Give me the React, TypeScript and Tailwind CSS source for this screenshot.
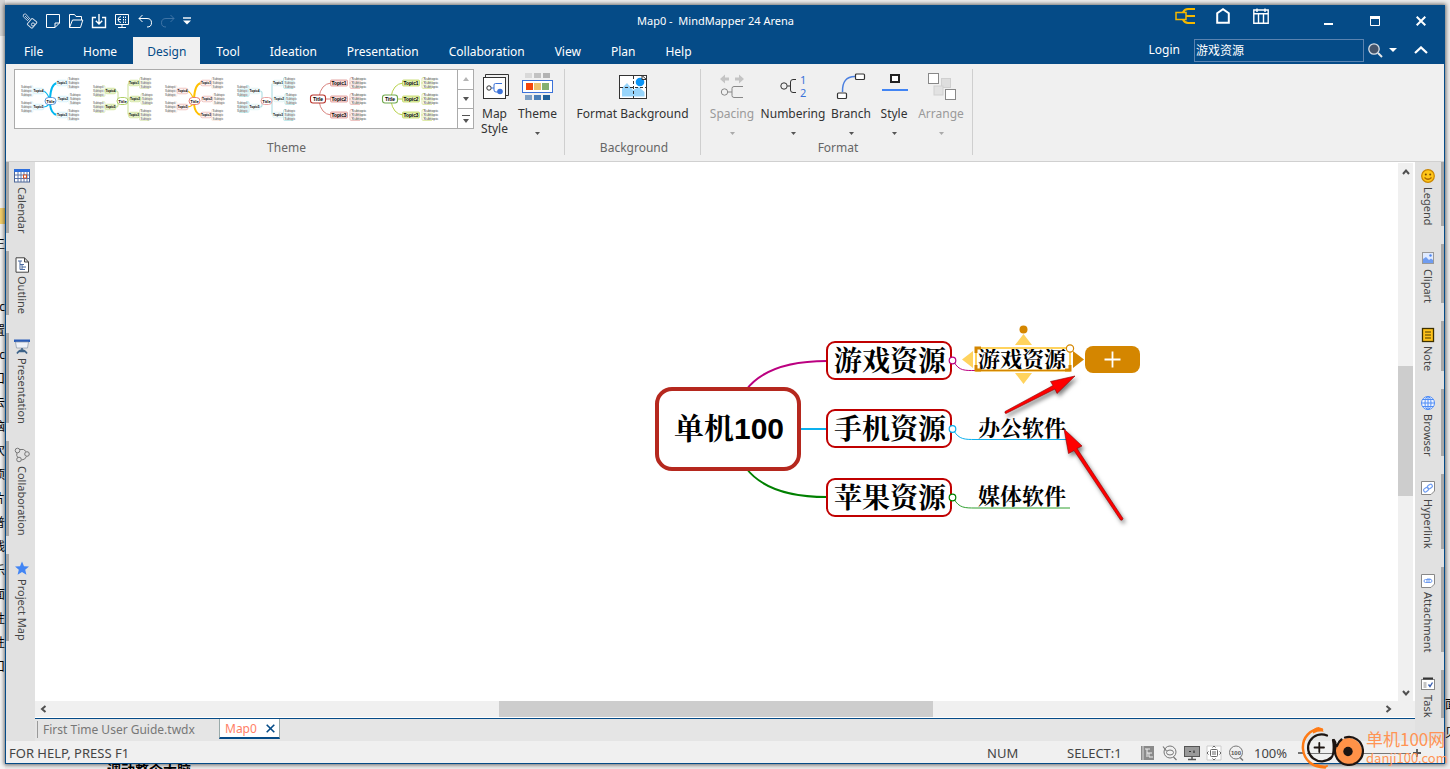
import React from "react";

const uiFont = "font-['Noto_Sans','Noto_Sans_CJK_SC',sans-serif]";

/* ---------- Theme thumbnails ---------- */

type Palette = { line: string; topic: string; fill: string; title: string; sub: string; curve: boolean };

function Label({ x, y, size, bold, children }: { x: number; y: number; size: number; bold?: boolean; children: string }) {
  return (
    <text x={x} y={y + size * 0.36} fontSize={size} textAnchor="middle" fontWeight={bold ? 700 : 400} fill={bold ? "#000" : "#444"} fontFamily="Liberation Sans, sans-serif">
      {children}
    </text>
  );
}

function Subs({ cx, y, side, color, size = 2.8 }: { cx: number; y: number; side: 1 | -1; color: string; size?: number }) {
  const half = size > 3 ? 8 : 5.5;
  const edge = cx - side * half;
  return (
    <g>
      <path
        d={`M${edge - side * 2} ${y} H${edge} M${edge + side * 2} ${y - 5.5} H${edge} q${-side} 0 ${-side} 1.5 V${y + 4} q0 1.5 ${side} 1.5 H${edge + side * 9} M${edge} ${y - 1.8} h${side * 10} M${edge} ${y + 2} h${side * 10}`}
        stroke={color}
        strokeWidth="0.6"
        fill="none"
        opacity="0.8"
      />
      {[-4, 0, 4].map((d) => (
        <Label key={d} x={cx} y={y + d} size={size}>
          Subtopic
        </Label>
      ))}
    </g>
  );
}

function RadialTheme({ p }: { p: Palette }) {
  const topics: [number, number, string][] = [
    [23.5, 21, "Topic4"],
    [23.5, 37, "Topic5"],
    [47, 13, "Topic1"],
    [48, 29, "Topic2"],
    [47, 45, "Topic3"],
  ];
  return (
    <svg viewBox="0 0 72 58" className="h-[58px] w-[72px]">
      {p.curve ? (
        <g fill="none" stroke={p.line}>
          <path d="M35 28 Q36 14 42 13 M35 34 Q36 44 42 45" strokeWidth="2" />
          <path d="M34 28 Q32 22 28 21 M34 34 Q32 37 28 37" strokeWidth="1.2" />
        </g>
      ) : (
        <path d="M29 21 q2 0 2 2 V35 q0 2 -2 2 M31 31 H40 M43 13 q-2 0 -2 2 V43 q0 2 2 2 M41 29 H44" fill="none" stroke={p.line} strokeWidth="1.2" />
      )}
      <Subs cx={11.5} y={21} side={-1} color={p.sub} />
      <Subs cx={11.5} y={37} side={-1} color={p.sub} />
      <Subs cx={59} y={13} side={1} color={p.sub} />
      <Subs cx={60.5} y={29} side={1} color={p.sub} />
      <Subs cx={59} y={45} side={1} color={p.sub} />
      {topics.map(([x, y, t]) => (
        <g key={t}>
          <rect x={x - 5.5} y={y - 2.8} width="11" height="5.6" rx="2" fill={p.fill} stroke={p.topic} strokeWidth="0.6" />
          <Label x={x} y={y} size={3.2} bold>
            {t}
          </Label>
        </g>
      ))}
      <rect x="30" y="27.5" width="11" height="7" rx="3.5" fill="#fff" stroke={p.title} strokeWidth="0.9" />
      <Label x={35.5} y={31} size={4.2} bold>
        Title
      </Label>
    </svg>
  );
}

function RightTheme({ line, title, fill }: { line: string; title: string; fill: string }) {
  return (
    <svg viewBox="0 0 72 58" className="h-[58px] w-[72px]">
      <path d="M16 27 Q18 14 28 13 M20 29 H28 M16 31 Q18 44 28 45" fill="none" stroke={line} strokeWidth="1" />
      {[13, 29, 45].map((y, i) => (
        <g key={y}>
          <Subs cx={56} y={y} side={1} color={line} size={3.8} />
          <rect x="27.5" y={y - 3} width="17" height="6" rx="1" fill={fill} stroke={line} strokeWidth="0.7" />
          <Label x={36} y={y} size={4.8} bold>
            {`Topic${i + 1}`}
          </Label>
        </g>
      ))}
      <rect x="7.5" y="25" width="15" height="8" rx="2.5" fill="#fff" stroke={title} strokeWidth="1.1" />
      <Label x={15} y={29} size={5} bold>
        Title
      </Label>
    </svg>
  );
}

function ThemeGallery() {
  return (
    <div className="flex h-[60px] w-[460px] shrink-0 border border-[#ababab] bg-white">
      <div className="flex flex-1 overflow-hidden">
        <button aria-label="Blue theme"><RadialTheme p={{ line: "#00b7f0", topic: "#c5ecf8", fill: "#f2fbfe", title: "#4a8fd8", sub: "#cfe8f0", curve: true }} /></button>
        <button aria-label="Green theme"><RadialTheme p={{ line: "#d3e4a4", topic: "#c9e08c", fill: "#e4f0c6", title: "#a7c957", sub: "#c3d98c", curve: false }} /></button>
        <button aria-label="Yellow theme"><RadialTheme p={{ line: "#ffc000", topic: "#e8a9a4", fill: "#fdf1f0", title: "#e57368", sub: "#f3d6c8", curve: true }} /></button>
        <button aria-label="Teal theme"><RadialTheme p={{ line: "#b5e0e4", topic: "#d8f0f0", fill: "#f4fcfc", title: "#e59a98", sub: "#7fcfd2", curve: false }} /></button>
        <button aria-label="Red theme"><RightTheme line="#d9837e" title="#b8332b" fill="#f9dddb" /></button>
        <button aria-label="Lime theme"><RightTheme line="#b9d24c" title="#6fa84c" fill="#e2efb0" /></button>
      </div>
      <div className="flex w-4 flex-col divide-y divide-[#ababab] border-l border-[#ababab]">
        <button aria-label="Scroll up" className="flex flex-1 items-center justify-center">
          <svg viewBox="0 0 6 4" className="h-1 w-[6px]"><path d="M0 4 L3 0 L6 4z" fill="#b5b5b5" /></svg>
        </button>
        <button aria-label="Scroll down" className="flex flex-1 items-center justify-center">
          <svg viewBox="0 0 6 4" className="h-1 w-[6px]"><path d="M0 0 L3 4 L6 0z" fill="#555" /></svg>
        </button>
        <button aria-label="More themes" className="flex flex-1 items-center justify-center">
          <svg viewBox="0 0 8 8" className="h-2 w-2"><path d="M0 .5H8" stroke="#555" /><path d="M1 4 L4 8 L7 4z" fill="#555" /></svg>
        </button>
      </div>
    </div>
  );
}

/* ---------- Title bar ---------- */

const quickIcons: { name: string; art: React.ReactNode }[] = [
  {
    name: "Customize",
    art: (
      <g>
        <path d="M1.5 1.5 L3.5 .8 L8 6 M1.5 1.5 L1.2 3.6 L6 8 M3 3 L7 7" stroke="#b9c9dc" />
        <rect x="7" y="6.2" width="6.5" height="8" rx="1" transform="rotate(40 10 10)" stroke="#d5deea" />
        <circle cx="11" cy="11.5" r="1.6" stroke="#d5deea" />
      </g>
    ),
  },
  { name: "New", art: <path d="M1.5 1.5 H14.5 V10 L10 14.5 H1.5z M10 14.5 V10 H14.5" stroke="#fff" /> },
  { name: "Open", art: <path d="M1.5 14.5 V1.5 H6.5 L8 3.5 H13.5 V7 M1.5 14.5 L4.5 7 H14.8 L12.5 14.5z" stroke="#fff" /> },
  { name: "Save", art: <path d="M5 4.5 H1.5 V14.5 H14.5 V4.5 H11 M8 1 V11 M4.8 7.8 L8 11 L11.2 7.8" stroke="#fff" strokeWidth="1.4" /> },
  { name: "Present", art: <path d="M1.5 1.5 H14.5 V11.5 H1.5z M8 11.5 V14.5 M4 14.5 H12 M7 3.5 Q4 4 4 6.500 T7 9.500 M4 6.500 H7 M9.500 3.500V5M9.500 6V7.500M9.500 8.500V10M11.500 3.500V5M11.500 6V7.500M11.500 8.500V10" stroke="#fff" /> },
  { name: "Undo", art: <path d="M5.5 2 L2 5.5 L5.5 9 M2 5.5 H10 Q14.5 5.5 14.5 9.8 T10 14" stroke="#fff" /> },
  { name: "Redo", art: <path d="M10.5 2 L14 5.5 L10.5 9 M14 5.5 H6 Q1.5 5.5 1.5 9.8 T6 14" stroke="#3f74a6" /> },
];

function TitleBar() {
  return (
    <div className="flex h-[30px] items-center text-white">
      <div className="flex w-[259px] items-center gap-[7px] pl-4">
        {quickIcons.map((q) => (
          <button key={q.name} aria-label={q.name} className="size-4">
            <svg viewBox="0 0 16 16" className="size-4" fill="none">{q.art}</svg>
          </button>
        ))}
        <button aria-label="Customize quick access">
          <svg viewBox="0 0 8 8" className="h-2 w-2"><path d="M0 1H8" stroke="#fff" strokeWidth="1.4" /><path d="M0 3.4H8L4 7.6z" fill="#fff" /></svg>
        </button>
      </div>
      <h1 className="flex-1 whitespace-pre text-center text-[11px]">Map0 -  MindMapper 24 Arena</h1>
      <div className="flex h-full w-[278px]">
        <div className="flex h-[18px] w-[114px]">
          <button aria-label="Map view" className="flex w-[38px] items-end justify-center">
            <svg viewBox="0 0 20 16" className="h-4 w-5" fill="none" stroke="#f5b800" strokeWidth="2"><rect x="1" y="4.5" width="10" height="7" strokeWidth="1.500" /><path d="M8 4.500 Q9.500 1 13 1 H20 M11 8 H20 M8 11.500 Q9.500 15 13 15 H20" /></svg>
          </button>
          <button aria-label="Home view" className="flex w-[38px] items-end justify-center">
            <svg viewBox="0 0 14 16" className="h-4 w-[14px]" fill="none" stroke="#fff" strokeWidth="2"><path d="M1.2 14.8 V5.2 L7 1.2 L12.8 5.2 V14.8z" /></svg>
          </button>
          <button aria-label="Planner view" className="flex w-[38px] items-end justify-center">
            <svg viewBox="0 0 16 16" className="size-4" fill="none" stroke="#fff" strokeWidth="1.4"><path d="M.8 2 H15.2 V15.2 H.8z M.8 5.8 H15.2 M5.5 6V15 M10.5 6V15 M4 .5V4 M12 .5V4" /></svg>
          </button>
        </div>
        <div className="ml-auto flex">
          <button aria-label="Minimize" className="flex w-[46px] items-center justify-center">
            <svg viewBox="0 0 10 10" className="h-[10px] w-[10px]"><path d="M0 8H9" stroke="#fff" strokeWidth="2" /></svg>
          </button>
          <button aria-label="Maximize" className="flex w-[46px] items-center justify-center">
            <svg viewBox="0 0 10 10" className="h-[10px] w-[10px]"><path d="M.5 .5H9.5V9.5H.5z" stroke="#fff" fill="none" /><path d="M0 1.5H10" stroke="#fff" strokeWidth="3" /></svg>
          </button>
          <button aria-label="Close" className="flex w-[46px] items-center justify-center">
            <svg viewBox="0 0 10 10" className="h-[10px] w-[10px]"><path d="M.7 .7L9.3 9.3M9.3 .7L.7 9.3" stroke="#fff" strokeWidth="2" /></svg>
          </button>
        </div>
      </div>
    </div>
  );
}

function MenuRow() {
  const tabs = ["Home", "Design", "Tool", "Ideation", "Presentation", "Collaboration", "View", "Plan", "Help"];
  return (
    <div className="flex h-7 items-end text-[12px] text-white">
      <nav className="flex gap-[2px]">
        <button className="h-[27px] w-[61px] pl-[18px] pt-[2px] text-left">File</button>
        {tabs.map((t) => (
          <button key={t} className={t === "Design" ? "h-[27px] bg-[#f0f0f0] px-[14px] pt-[2px] text-[#054b87]" : "h-[27px] px-[14px] pt-[2px]"}>
            {t}
          </button>
        ))}
      </nav>
      <div className="ml-auto flex h-full items-center">
        <a href="#login" className="mr-[14px]">Login</a>
        <input aria-label="Search" defaultValue="游戏资源" className="h-[23px] w-[170px] border border-[#5a83b0] bg-transparent px-px text-[12px] text-white outline-none" />
        <button aria-label="Find" className="ml-1">
          <svg viewBox="0 0 15 15" className="h-[15px] w-[15px]"><circle cx="6" cy="6" r="5.2" fill="#46556b" stroke="#d9dfe6" strokeWidth="1.3" /><path d="M10 10L14 14" stroke="#e8e8e8" strokeWidth="2" /></svg>
        </button>
        <button aria-label="Find options" className="ml-[6px]">
          <svg viewBox="0 0 8 4" className="h-1 w-2"><path d="M0 0H8L4 4z" fill="#fff" /></svg>
        </button>
        <button aria-label="Collapse ribbon" className="ml-[17px] mr-4">
          <svg viewBox="0 0 14 8" className="h-2 w-[14px]"><path d="M1 7L7 1.4L13 7" stroke="#fff" strokeWidth="2.2" fill="none" /></svg>
        </button>
      </div>
    </div>
  );
}

/* ---------- Ribbon ---------- */

function RibbonButton({ label, width, icon, drop, disabled }: { label: string; width: string; icon: React.ReactNode; drop?: boolean; disabled?: boolean }) {
  return (
    <button disabled={disabled} className={`${width} flex h-[70px] shrink-0 flex-col items-center ${disabled ? "text-[#9a9a9a]" : "text-[#333]"}`}>
      <span className="flex h-[37px] items-start pt-1">
        <svg viewBox="0 0 32 28" className="h-7 w-8" fill="none">{icon}</svg>
      </span>
      <span className="text-center text-[12px] leading-[15px]">{label}</span>
      {drop && (
        <svg viewBox="0 0 5 3" className="mt-[11px] h-[3px] w-[5px]"><path d="M0 0H5L2.5 3z" fill={disabled ? "#aaa" : "#555"} /></svg>
      )}
    </button>
  );
}

function Group({ title, width, children }: { title: string; width: string; children: React.ReactNode }) {
  return (
    <section className={`${width} flex h-full shrink-0 pb-[6px] pt-[5px]`}>
      <div className="flex flex-1 flex-col border-r border-[#cfcfcf]">
        <div className="flex flex-1">{children}</div>
        <h2 className="h-[15px] pl-[3px] text-center text-[12px] leading-[15px] text-[#666]">{title}</h2>
      </div>
    </section>
  );
}

function Ribbon() {
  const ink = "#333";
  return (
    <div className="flex h-[98px] shrink-0 border-b border-[#d0d0d0] bg-[#f0f0f0]">
      <Group title="Theme" width="w-[559px]">
        <div className="flex pl-2">
          <ThemeGallery />
          <RibbonButton
            label="Map Style"
            width="w-[41px]"
            icon={<g stroke={ink}><path d="M6.5 4.5V1.5H29.5V22.5H27" /><rect x="4.5" y="4.5" width="22" height="21" fill="#fff" /><circle cx="10" cy="15" r="2.2" /><path d="M12.2 15H15 M23 10.5H16.5Q15 10.5 15 12V17Q15 19 17 19H19" stroke="#3b72d9" /><circle cx="21" cy="18.5" r="2.8" fill="#3b72d9" stroke="none" /></g>}
          />
          <RibbonButton
            label="Theme"
            width="w-[45px]"
            drop
            icon={
              <g>
                {["#d9d9d9", "#c2c2c2", "#b3b3b3"].map((c, i) => <rect key={c} x={3 + i * 9} y="0" width="7" height="5" fill={c} />)}
                <rect x=".5" y="7.5" width="30" height="12" stroke="#3b72d9" fill="#fff" />
                {["#f5450a", "#ecc36e", "#84b070"].map((c, i) => <rect key={c} x={4 + i * 8} y="10" width="7" height="7" fill={c} />)}
                {["#7fa0c4", "#4a7fb8", "#1f6099"].map((c, i) => <rect key={c} x={3 + i * 9} y="22" width="7" height="5" fill={c} />)}
              </g>
            }
          />
        </div>
      </Group>
      <Group title="Background" width="w-[136px]">
        <RibbonButton
          label="Format Background"
          width="w-full"
          icon={
            <g>
              <rect x="2.5" y="2.5" width="27" height="23" fill="#fff" stroke={ink} />
              <path d="M5 23.5V15L10 10L16 17L22 14L27.5 19V23.5z" fill="#98d5fb" />
              <circle cx="23" cy="9" r="4.3" fill="#0a93f5" />
              <path d="M16.5 3V25M3 14.5H29" stroke={ink} strokeDasharray="3 2" />
              <path d="M25 2.5V6.5H29.5z" fill="#fff" stroke={ink} />
            </g>
          }
        />
      </Group>
      <Group title="Format" width="w-[272px]">
        <div className="flex pl-1">
          <RibbonButton label="Spacing" width="w-[54px]" drop disabled icon={<g><path d="M4 6L9 1.500V4.500H13V7.500H9V10.500z M28 6L23 1.500V4.500H19V7.500H23V10.500z" fill="#c4c4c4" /><circle cx="8.500" cy="19" r="3.200" stroke="#888" /><path d="M12 19H16 M27 13.500H18Q16 13.500 16 15.500V22.500Q16 24.500 18 24.500H27" stroke="#888" /></g>} />
          <RibbonButton label="Numbering" width="w-[68px]" drop icon={<g><circle cx="7" cy="13" r="3.200" stroke={ink} /><path d="M10.500 13H13.500 M19 6.500H16Q13.500 6.500 13.500 9V17Q13.500 19.500 16 19.500H19" stroke={ink} /><text x="23" y="11" fontSize="11" fill="#3b72d9" fontFamily="Noto Sans">1</text><text x="23" y="24" fontSize="11" fill="#3b72d9" fontFamily="Noto Sans">2</text></g>} />
          <RibbonButton label="Branch" width="w-[48px]" drop icon={<g><path d="M7.500 19Q7 3.500 20 3.500" stroke="#4a7fe0" strokeWidth="1.500" /><rect x="20.500" y="1" width="9" height="5.500" rx="1" fill="#fff" stroke={ink} strokeWidth="1.200" /><rect x="2.500" y="20" width="9" height="5.500" rx="1" fill="#fff" stroke={ink} strokeWidth="1.200" /></g>} />
          <RibbonButton label="Style" width="w-[38px]" drop icon={<g><rect x="13" y="2" width="8" height="7" fill="#fff" stroke="#222" strokeWidth="2" /><path d="M4 17H30" stroke="#4285f4" strokeWidth="2" /></g>} />
          <RibbonButton label="Arrange" width="w-[56px]" drop disabled icon={<g stroke="#888"><rect x="16.500" y="5.500" width="9" height="9" fill="#dedede" stroke="#d0d0d0" /><rect x="9" y="13" width="9" height="9" fill="#e2e2e2" stroke="#d0d0d0" /><rect x="3.500" y=".5" width="10" height="10" fill="#fff" /><rect x="20.500" y="16.500" width="10" height="10" fill="#fff" /></g>} />
        </div>
      </Group>
    </div>
  );
}

/* ---------- Side panels ---------- */

type SideItem = { label: string; art: React.ReactNode };

const leftItems: SideItem[] = [
  { label: "Calendar", art: <g><rect x=".5" y="2" width="15" height="12" fill="#fff" stroke="#4a6496" /><path d="M0 1H16V4H0z" fill="#2f6fdc" /><path d="M1 7H15M1 10.500H15M4 4V14M7 4V14M10 4V14M13 4V14" stroke="#5a74a8" /><rect x="9.500" y="7" width="3" height="3" fill="#fff" stroke="#d9501e" /></g> },
  { label: "Outline", art: <g><path d="M2 .8H10.500L14.500 5V15.200H2z M10.500 .8V5H14.500" fill="#fff" stroke="#444" /><path d="M4 4H8M6 4V12.500M6 7.500H10M8 7.500V12M8 10H12M6 12.500H11" stroke="#4a6aa0" fill="none" /></g> },
  { label: "Presentation", art: <g><path d="M0 .5H16V3H0z" fill="#2a5db8" /><path d="M1.500 3H14.500L13.500 9H2.500z" fill="#eef2f8" stroke="#8a96a8" strokeWidth=".7" /><path d="M8 9V13M3 14.500Q5 11 8 11T13 14.500M5 12.500H11" stroke="#3c6288" strokeWidth="1.600" fill="none" /></g> },
  { label: "Collaboration", art: <g fill="none" stroke="#777"><circle cx="3.500" cy="3.500" r="2.300" /><circle cx="13" cy="7" r="2.300" /><circle cx="5" cy="12.500" r="2.300" /><path d="M6 2.500Q10 1.500 12 4.500M12.500 9.500Q11 13 7.500 13M3 6Q2 8.500 3.800 10.500" /></g> },
  { label: "Project Map", art: <path d="M8 1.500L10 6.200L15 6.500L11.200 9.800L12.400 14.700L8 12L3.600 14.700L4.800 9.800L1 6.500L6 6.200z" fill="#4285f4" /> },
];

const rightItems: SideItem[] = [
  { label: "Legend", art: <g><circle cx="8" cy="8" r="6.300" fill="#ffc61a" stroke="#c98500" strokeWidth="1.200" /><circle cx="5.800" cy="6.500" r="1" fill="#7a4a00" /><circle cx="10.200" cy="6.500" r="1" fill="#7a4a00" /><path d="M4.500 9.500Q8 13 11.500 9.500" stroke="#a86400" fill="none" strokeWidth="1.200" /></g> },
  { label: "Clipart", art: <g><rect x="2.500" y="2.500" width="11" height="11" fill="#dfeaff" stroke="#999" /><path d="M3 13V9L6 7L9 10L11 8.500L13 10V13z" fill="#6f9cf0" /><circle cx="10.500" cy="5.500" r="1.200" fill="#4f86ee" /></g> },
  { label: "Note", art: <g><rect x="2.500" y="1.500" width="11" height="13" fill="#ffc21a" stroke="#3d3000" strokeWidth="1.300" /><path d="M5 5H11M5 8H11M5 11H11" stroke="#4a3a00" /></g> },
  { label: "Browser", art: <g fill="#eef4ff" stroke="#4f8cf5"><circle cx="8" cy="8" r="6.500" /><ellipse cx="8" cy="8" rx="3" ry="6.500" fill="none" /><path d="M1.500 8H14.500M2.500 4.500H13.500M2.500 11.500H13.500M8 1.500V14.500" /></g> },
  { label: "Hyperlink", art: <g fill="none"><path d="M1.500 1.500H14.500V11L11 14.500H1.500z" fill="#fff" stroke="#888" /><rect x="3.500" y="8" width="5" height="3.500" rx="1.500" transform="rotate(-35 6 9.700)" stroke="#6f9cf0" strokeWidth="1.200" /><rect x="7.500" y="4.700" width="5" height="3.500" rx="1.500" transform="rotate(-35 10 6.500)" stroke="#6f9cf0" strokeWidth="1.200" /></g> },
  { label: "Attachment", art: <g fill="none"><path d="M1.500 1.500H14.500V11L11 14.500H1.500z" fill="#fff" stroke="#888" /><path d="M11 6.500H5.500Q4 6.500 4 8T5.500 9.500H10Q12 9.500 12 8T10 6H7M6 8H10" stroke="#6f9cf0" /></g> },
  { label: "Task", art: <g><rect x="1.500" y="3.500" width="13" height="10" fill="#fff" stroke="#888" /><path d="M3 2.500H13" stroke="#333" strokeWidth="2" /><path d="M3.500 7H6.500M3.500 9H6.500M3.500 11H6.500" stroke="#888" /><path d="M8.500 8.500L10 10.500L12.500 6.500" stroke="#3b5fb0" strokeWidth="1.400" fill="none" /></g> },
];

function SidePanel({ items, side }: { items: SideItem[]; side: "left" | "right" }) {
  return (
    <aside className="flex w-[29px] shrink-0 flex-col gap-[18px] overflow-hidden bg-[#e1e1e1]">
      {items.map((it) => (
        <button
          key={it.label}
          className={
            side === "left"
              ? "flex w-full shrink-0 flex-col items-center gap-[3px] border-l-[3px] border-[#a8a8a8] pt-[6px]"
              : "flex w-full shrink-0 flex-col items-center gap-[3px] border-r-[3px] border-[#a8a8a8] pt-[6px]"
          }
        >
          <svg viewBox="0 0 16 16" className="size-4 shrink-0">{it.art}</svg>
          <span className="text-[11px] leading-4 text-[#444] [writing-mode:vertical-rl]">{it.label}</span>
        </button>
      ))}
    </aside>
  );
}

/* ---------- Mind map ---------- */

function MindMap() {
  const topic = "absolute flex h-[39px] w-[126px] items-center justify-center rounded-[9px] border-2 border-[#c00000] bg-white pl-[2px] pt-[2px] text-[28px] leading-none font-bold";
  const sub = "absolute w-[92px] text-center text-[22px] leading-[24px] font-bold";
  return (
    <div className="absolute left-[620px] top-[163px] h-[200px] w-[490px] whitespace-nowrap text-black font-['Liberation_Serif','Noto_Serif_CJK_SC','Noto_Sans_CJK_SC',serif]">
      <svg viewBox="655 325 490 200" className="absolute inset-0 h-[200px] w-[490px]" fill="none">
        <path d="M746 390Q768 361 827 361" stroke="#bb0080" strokeWidth="2" />
        <path d="M800 429H827" stroke="#0cb0ee" strokeWidth="2" />
        <path d="M746 468Q768 497 827 497" stroke="#008000" strokeWidth="2" />
        <path d="M954 362C959 371 965 370.500 975 370.500H1071" stroke="#bb0080" />
        <path d="M954 431C959 439.500 965 439.500 975 439.500H1070" stroke="#0cb0ee" />
        <path d="M954 499C959 508 965 508 975 508H1070" stroke="#30a030" />
      </svg>
      <div className="absolute left-0 top-[62px] flex h-[84px] w-[146px] items-center justify-center rounded-[17px] border-4 border-[#b5281e] bg-white pl-[2px] text-[30px] leading-none font-bold font-['Liberation_Sans','Noto_Serif_CJK_SC','Noto_Sans_CJK_SC',sans-serif]">单机100</div>
      <div className={`${topic} left-[171px] top-[16px]`}>游戏资源</div>
      <div className={`${topic} left-[171px] top-[84px]`}>手机资源</div>
      <div className={`${topic} left-[171px] top-[153px]`}>苹果资源</div>
      <div className={`${sub} left-[321px] top-[23px]`}>游戏资源</div>
      <div className={`${sub} left-[321px] top-[92px]`}>办公软件</div>
      <div className={`${sub} left-[321px] top-[160px]`}>媒体软件</div>
      <button aria-label="Add topic" className="absolute left-[430px] top-[21px] flex h-[27px] w-[55px] items-center justify-center rounded-[8px] bg-[#d48600]">
        <svg viewBox="0 0 17 17" className="h-[17px] w-[17px]"><path d="M8.500 .5V16.500M.5 8.500H16.500" stroke="#fff" strokeWidth="1.800" /></svg>
      </button>
      <svg viewBox="655 325 490 200" className="pointer-events-none absolute inset-0 h-[200px] w-[490px] overflow-visible" fill="none">
        <g fill="#fff" strokeWidth="1.200">
          <circle cx="952.500" cy="360.500" r="3.300" stroke="#bb0080" />
          <circle cx="952.500" cy="429" r="3.300" stroke="#0cb0ee" />
          <circle cx="952.500" cy="497.500" r="3.300" stroke="#008000" />
        </g>
        <rect x="976" y="348" width="94" height="22.500" stroke="#ffd35e" strokeWidth="2" />
        <path d="M981 348H976V353M976 365V370H981M1070 365V370H1065" stroke="#d48600" strokeWidth="3" />
        <path d="M976 370.500H1070" stroke="#d48600" strokeWidth="1.500" />
        <circle cx="1070" cy="348.500" r="3.600" fill="#fff" stroke="#d48600" strokeWidth="1.200" />
        <circle cx="1023.500" cy="329.500" r="4" fill="#d48600" />
        <path d="M1015 345L1023.500 334L1032 345zM1015 373H1032L1023.500 384zM973 351V368L962 359.500z" fill="#ffd35e" />
        <path d="M1073 351V368L1084 359.500z" fill="#d48600" />
        <g fill="#fe0000" stroke="#8a0000" strokeWidth=".6" className="drop-shadow-[2px_3px_2px_rgba(0,0,0,0.5)]">
          <path d="M1005 411.500L1053 385.500L1050.500 381.500L1075 376L1057 393.500L1055 389L1006 413.500Q1004.500 413.500 1005 411.500z" />
          <path d="M1064 429L1082 446L1077 448.500L1123 518.500Q1122.500 521 1120.500 520L1074 450.500L1068.500 453.500z" />
        </g>
      </svg>
    </div>
  );
}

function Chevron({ d }: { d: string }) {
  return (
    <svg viewBox="0 0 8 8" className="size-2"><path d={d} stroke="#505050" strokeWidth="2" fill="none" /></svg>
  );
}

function Workspace() {
  return (
    <main className="flex min-w-0 flex-1 flex-col bg-white">
      <div className="flex min-h-0 flex-1">
        <div className="relative min-w-0 flex-1 overflow-hidden bg-white">
          <MindMap />
        </div>
        <div className="mr-[2px] mt-px flex w-[15px] shrink-0 flex-col items-center bg-[#f0f0f0]">
          <button aria-label="Scroll up" className="flex h-[17px] items-center"><Chevron d="M1 6L4 2.500L7 6" /></button>
          <div className="flex w-full flex-1 flex-col">
            <div className="flex-[186]" />
            <div className="w-full flex-[130] bg-[#cdcdcd]" />
            <div className="flex-[188]" />
          </div>
          <button aria-label="Scroll down" className="flex h-[17px] items-center"><Chevron d="M1 2L4 5.500L7 2" /></button>
        </div>
      </div>
      <div className="mb-px flex h-4 shrink-0 items-center bg-[#f0f0f0] pr-[18px]">
        <button aria-label="Scroll left" className="flex h-full w-[18px] items-center justify-center"><Chevron d="M5.500 1L2 4L5.500 7" /></button>
        <div className="flex h-full flex-1">
          <div className="flex-[446]" />
          <div className="flex-[434] bg-[#cdcdcd]" />
          <div className="flex-[446]" />
        </div>
        <button aria-label="Scroll right" className="flex h-full w-[18px] items-center justify-center"><Chevron d="M2.500 1L6 4L2.500 7" /></button>
      </div>
      <div className="flex h-[23px] shrink-0 items-start border-t border-[#054b87] bg-[#e5e5e5] text-[12px] leading-[19px]">
        <button className="ml-[2px] mt-[2px] w-[182px] border-l border-[#999] pl-[5px] text-left leading-[17px] text-[#777]">First Time User Guide.twdx</button>
        <div className="flex h-[20px] w-[61px] items-center justify-between border border-b-2 border-t-0 border-[#9aa] border-b-[#054b87] bg-white pl-[5px] pr-1 text-[#ff7f66]">
          <button>Map0</button>
          <button aria-label="Close Map0">
            <svg viewBox="0 0 9 9" className="h-[9px] w-[9px]"><path d="M.7 .7L8.300 8.300M8.300 .7L.7 8.300" stroke="#054b87" strokeWidth="1.600" /></svg>
          </button>
        </div>
      </div>
    </main>
  );
}

/* ---------- Status bar ---------- */

function StatusBar() {
  return (
    <footer className="flex h-[22px] shrink-0 items-center bg-[#f0f0f0] pl-[3px] pt-[2px] text-[13px] leading-5 text-[#444]">
      <span>FOR HELP, PRESS F1</span>
      <span className="ml-auto w-[80px]">NUM</span>
      <span className="w-[73px]">SELECT:1</span>
      <div className="flex gap-[6px]">
        <button aria-label="Outline view"><svg viewBox="0 0 16 16" className="size-4"><rect x="1" y="1" width="13" height="14" fill="#8a8a8a" /><path d="M3 1V15" stroke="#ddd" /><path d="M5 4H10M7 4V12M7 8H12M9 8V12H13" stroke="#eee" fill="none" /></svg></button>
        <button aria-label="Focus"><svg viewBox="0 0 16 16" className="size-4" fill="none" stroke="#777"><circle cx="8" cy="7" r="6" /><ellipse cx="8" cy="7.500" rx="3.500" ry="2.500" /><path d="M1 1.500L4.500 6M11.500 12L14.500 15" strokeWidth="1.200" /></svg></button>
        <button aria-label="Full screen"><svg viewBox="0 0 16 16" className="size-4"><rect x=".5" y="1.500" width="15" height="10" fill="#999" stroke="#555" /><path d="M8 12V14.500M4 14.500H12" stroke="#555" strokeWidth="1.500" /><path d="M5 6.500H7M10 5.500V8" stroke="#333" strokeWidth="1.200" /></svg></button>
        <button aria-label="Fit map"><svg viewBox="0 0 16 16" className="size-4" fill="none" stroke="#666"><path d="M1 1H15V15H1z" fill="#fff" stroke="#ccc" /><rect x="4.500" y="4.500" width="7" height="7" rx="1" /><path d="M6 7H10M6 9H10M6.500 2.500L8 1L9.500 2.500M6.500 13.500L8 15L9.500 13.500M2.500 6.500L1 8L2.500 9.500M13.500 6.500L15 8L13.500 9.500" /></svg></button>
        <button aria-label="Actual size"><svg viewBox="0 0 16 16" className="size-4" fill="none" stroke="#777"><circle cx="8" cy="7.500" r="6.500" /><path d="M12 12.500L15 15.500" strokeWidth="1.400" /><text x="8" y="9.800" fontSize="6" fontWeight="700" textAnchor="middle" fill="#555" stroke="none" fontFamily="Liberation Sans">100</text></svg></button>
      </div>
      <span className="ml-[10px] w-[43px]">100%</span>
      <button aria-label="Zoom out" className="flex w-[10px] items-center"><svg viewBox="0 0 8 8" className="size-2"><path d="M1 4H7" stroke="#555" strokeWidth="1.600" /></svg></button>
      <input type="range" aria-label="Zoom" min={0} max={100} defaultValue={35} className="h-px w-[104px] appearance-none bg-[#777] [&::-webkit-slider-thumb]:h-3 [&::-webkit-slider-thumb]:w-[6px] [&::-webkit-slider-thumb]:appearance-none [&::-webkit-slider-thumb]:bg-[#777]" />
      <button aria-label="Zoom in" className="ml-[2px] mr-[23px]"><svg viewBox="0 0 8 8" className="size-2"><path d="M0 4H8M4 0V8" stroke="#555" strokeWidth="1.800" /></svg></button>
    </footer>
  );
}

function SiteBadge() {
  return (
    <div className="pointer-events-none absolute bottom-0 right-[4px] flex h-[43px] items-start">
      <svg viewBox="1300 726 66 43" className="h-[43px] w-[66px]" fill="none" strokeLinecap="round">
        <path d="M1322 729.500C1310 728 1302 738 1303 749C1304 760 1312 767 1325 767.500" stroke="#ff7a14" strokeWidth="2.500" />
        <path d="M1314 730Q1320 726 1322 730.500Q1318 730 1314 732zM1317 765Q1324 768 1327 766" fill="#ff7a14" stroke="#ff7a14" strokeWidth="2" />
        <circle cx="1348.500" cy="751.500" r="13.500" fill="#ff9248" />
        <path d="M1327 735.500A13.500 13.500 0 1 0 1331 757.500" stroke="#1d1512" strokeWidth="2.200" />
        <path d="M1333 740Q1334 745 1333.500 751Q1333 758 1329 759.500M1337 746Q1338.500 741.500 1341.500 739.500M1345 737.500A14 14 0 1 1 1335.500 747Q1336 742 1334 740" stroke="#1d1512" strokeWidth="2.200" />
        <path d="M1314.500 747.500H1324M1319.300 743V752" stroke="#1d1512" strokeWidth="1.800" />
        <circle cx="1348" cy="751.500" r="4.700" fill="#1d1512" />
      </svg>
      <div className="w-20 whitespace-nowrap text-[#ff9455] font-['Noto_Sans_CJK_SC',sans-serif]">
        <p className="mt-[3px] text-[17px] leading-[20px]">单机100网</p>
        <p className="text-[13px] leading-[17px]">danji100.com</p>
      </div>
    </div>
  );
}

function Backdrop() {
  const fragments = ["c", "置", "c", "口", "去", "脑", "次", "项", "片", "普", "线", "乐", "面", "性", "性", "口"];
  return (
    <div aria-hidden="true" className="absolute inset-0 flex justify-between overflow-hidden bg-[#ececec] text-[12px] leading-6 text-black">
      <div className="w-[5px] overflow-hidden bg-[#f4f4f4]">
        <div className="h-9 bg-[#d5d5d5]" />
        <div className="mt-[172px] h-4 bg-[#f4cf6b]" />
        <div className="mt-[9px] flex w-[5px] flex-col items-end">
          <span className="mb-[38px] h-6">王</span>
          {fragments.map((f, i) => (
            <span key={i} className="h-6">{f}</span>
          ))}
        </div>
      </div>
      <div className="ml-[102px] flex-1 self-end whitespace-nowrap text-[14px] font-bold leading-[14px]">
        <p className="-mb-2">调动整个大脑</p>
      </div>
      <div className="flex w-[5px] flex-col overflow-hidden pt-[693px]">
        <span>面</span>
        <span className="mt-1">贝</span>
      </div>
    </div>
  );
}

export default function App() {
  return (
    <div className={`relative h-screen w-full overflow-hidden p-[5px] ${uiFont}`}>
      <Backdrop />
      <div className="relative flex h-full flex-col border border-[#054b87] bg-[#f0f0f0] shadow-[0_0_4px_1px_rgba(0,0,0,0.55)]">
        <header className="shrink-0 bg-[#054b87]">
          <TitleBar />
          <MenuRow />
        </header>
        <Ribbon />
        <div className="flex min-h-0 flex-1">
          <SidePanel items={leftItems} side="left" />
          <Workspace />
          <SidePanel items={rightItems} side="right" />
        </div>
        <StatusBar />
      </div>
      <SiteBadge />
    </div>
  );
}
